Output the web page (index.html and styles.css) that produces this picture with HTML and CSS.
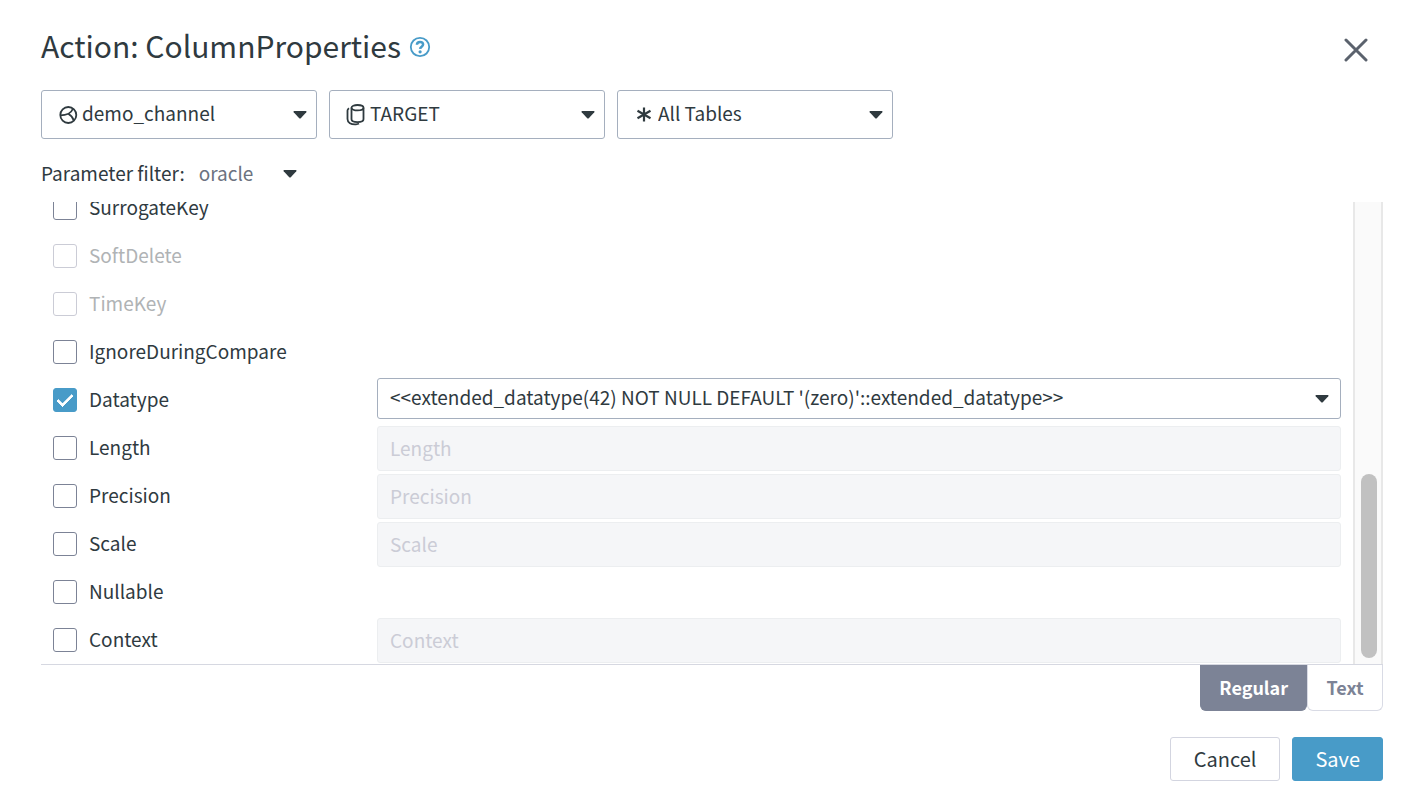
FILE: index.html
```html
<!DOCTYPE html>
<html lang="en">
<head>
    <meta charset="UTF-8">
    <meta name="viewport" content="width=device-width, initial-scale=1.0">
    <title>Action: ColumnProperties</title>
    <link rel="stylesheet" href="styles.css">
</head>
<body>
    <form class="dialog">
        <header class="dialog-header">
            <h1>Action: ColumnProperties</h1>
            <a class="help" href="#" aria-label="Help">
                <svg width="22" height="22" viewBox="0 0 22 22" fill="none" stroke="currentColor">
                    <circle cx="11" cy="11" r="9.200" stroke-width="1.800"/>
                    <path d="M7.900 8.800C8 6.900 9.300 6 11 6c1.800 0 3.100 1 3.100 2.600 0 2-2.900 2.200-3 4.300" stroke-width="2.500"/>
                    <circle cx="11.100" cy="15.800" r="1.600" fill="currentColor" stroke="none"/>
                </svg>
            </a>
            <button type="button" class="close" aria-label="Close">
                <svg width="24" height="24" viewBox="0 0 24 24" fill="none" stroke="currentColor" stroke-width="3" stroke-linecap="round">
                    <path d="M2 2l20 20M22 2L2 22"/>
                </svg>
            </button>
        </header>

        <div class="scope">
            <div class="dropdown">
                <select aria-label="Channel"><option>demo_channel</option></select>
                <svg class="icon" width="20" height="20" viewBox="0 0 20 20" fill="none" stroke="currentColor" stroke-width="1.800">
                    <circle cx="10.300" cy="10" r="8"/>
                    <path d="M2.300 10.300C8 10.300 13.500 8 15 3.500M10.500 9c2.500 1.300 4.300 3.500 5.300 6.500"/>
                </svg>
                <svg class="arrow" width="14" height="8" viewBox="0 0 14 8"><path d="M1 0h12q1 0.500 0.300 1.300L8 7q-1 1-2 0L0.700 1.300Q0 0.500 1 0z" fill="currentColor"/></svg>
            </div>
            <div class="dropdown">
                <select aria-label="Location"><option>TARGET</option></select>
                <svg class="icon" width="20" height="22" viewBox="0 0 20 22" fill="none" stroke="currentColor" stroke-width="1.800">
                    <ellipse cx="11.500" cy="3.700" rx="6" ry="2.700"/>
                    <path d="M5.500 3.700v11.500c0 3.800 12 3.800 12 0V3.700"/>
                    <path d="M3 4.300C2 5 1.500 5.500 1.500 6.500V15c0 3.800 3.500 5.600 8.500 5.300 1.300-.1 2.300-.4 3-.8"/>
                </svg>
                <svg class="arrow" width="14" height="8" viewBox="0 0 14 8"><path d="M1 0h12q1 0.500 0.300 1.300L8 7q-1 1-2 0L0.700 1.300Q0 0.500 1 0z" fill="currentColor"/></svg>
            </div>
            <div class="dropdown">
                <select aria-label="Tables"><option>All Tables</option></select>
                <svg class="icon" width="20" height="20" viewBox="0 0 20 20" fill="none" stroke="currentColor" stroke-width="2.200">
                    <path d="M10 2.500v14M3.500 5.800l13 7.400M16.500 5.800l-13 7.400"/>
                </svg>
                <svg class="arrow" width="14" height="8" viewBox="0 0 14 8"><path d="M1 0h12q1 0.500 0.300 1.300L8 7q-1 1-2 0L0.700 1.300Q0 0.500 1 0z" fill="currentColor"/></svg>
            </div>
        </div>

        <div class="filter">
            <label for="filter">Parameter filter:</label>
            <div class="dropdown plain">
                <select id="filter"><option>oracle</option></select>
                <svg class="arrow" width="14" height="8" viewBox="0 0 14 8"><path d="M1 0h12q1 0.500 0.300 1.300L8 7q-1 1-2 0L0.700 1.300Q0 0.500 1 0z" fill="currentColor"/></svg>
            </div>
        </div>

        <div class="params">
            <div class="param-list">
                <div class="param">
                    <label><input type="checkbox">SurrogateKey</label>
                </div>
                <div class="param">
                    <label class="disabled"><input type="checkbox" disabled>SoftDelete</label>
                </div>
                <div class="param">
                    <label class="disabled"><input type="checkbox" disabled>TimeKey</label>
                </div>
                <div class="param">
                    <label><input type="checkbox">IgnoreDuringCompare</label>
                </div>
                <div class="param">
                    <label><input type="checkbox" checked>Datatype</label>
                    <div class="dropdown value">
                        <select aria-label="Datatype value"><option>&lt;&lt;extended_datatype(42) NOT NULL DEFAULT '(zero)'::extended_datatype&gt;&gt;</option></select>
                        <svg class="arrow" width="14" height="8" viewBox="0 0 14 8"><path d="M1 0h12q1 0.500 0.300 1.300L8 7q-1 1-2 0L0.700 1.300Q0 0.500 1 0z" fill="currentColor"/></svg>
                    </div>
                </div>
                <div class="param">
                    <label><input type="checkbox">Length</label>
                    <input type="text" aria-label="Length value" placeholder="Length" disabled>
                </div>
                <div class="param">
                    <label><input type="checkbox">Precision</label>
                    <input type="text" aria-label="Precision value" placeholder="Precision" disabled>
                </div>
                <div class="param">
                    <label><input type="checkbox">Scale</label>
                    <input type="text" aria-label="Scale value" placeholder="Scale" disabled>
                </div>
                <div class="param">
                    <label><input type="checkbox">Nullable</label>
                </div>
                <div class="param">
                    <label><input type="checkbox">Context</label>
                    <input type="text" aria-label="Context value" placeholder="Context" disabled>
                </div>
            </div>
            <div class="scrollbar"><div class="thumb"></div></div>
        </div>

        <div class="tabs">
            <button type="button" class="tab active">Regular</button>
            <button type="button" class="tab">Text</button>
        </div>

        <footer class="actions">
            <button type="button" class="btn">Cancel</button>
            <button type="submit" class="btn btn-primary">Save</button>
        </footer>
    </form>
</body>
</html>
```

FILE: styles.css
```css
* {
    box-sizing: border-box;
}
body {
    margin: 0;
    background: #fff;
    color: #2f3a3f;
    font-family: "Noto Sans CJK SC", "Open Sans", sans-serif;
    font-size: 19px;
    line-height: 28px;
}
button, input, select {
    margin: 0;
    font: inherit;
    color: inherit;
}
button, select, label {
    cursor: pointer;
}
svg {
    display: block;
}
.dialog {
    display: flex;
    flex-direction: column;
    height: 100vh;
    padding: 24px 39px 27px 41px;
}

/* Header */
.dialog-header {
    display: flex;
    align-items: center;
    height: 46px;
    margin-bottom: 20px;
}
h1 {
    margin: 0;
    padding-bottom: 4px;
    font-size: 30px;
    font-weight: 400;
    line-height: 42px;
}
.help {
    margin-left: 8px;
    color: #489bc8;
}
.close {
    margin-left: auto;
    padding: 6px 15px 0;
    border: none;
    background: none;
    color: #5b626d;
}

/* Dropdowns */
.scope {
    display: flex;
    gap: 12px;
}
.dropdown {
    display: grid;
    align-items: center;
    width: 276px;
    height: 49px;
}
.dropdown > * {
    grid-area: 1 / 1;
}
.dropdown select {
    width: 100%;
    height: 100%;
    padding: 0 36px 3px 40px;
    border: 1px solid #a5afbe;
    border-radius: 3px;
    background: #fff;
    appearance: none;
}
.dropdown svg {
    pointer-events: none;
}
.dropdown .icon {
    margin-left: 17px;
}
.dropdown .arrow {
    justify-self: end;
    margin-right: 10px;
}
.dropdown.plain {
    width: 122px;
    height: 27px;
}
.dropdown.plain select {
    padding: 0 36px 2px 14px;
    border: none;
    color: #6b7280;
}
.dropdown.value {
    flex: 1;
    height: 41px;
}
.dropdown.value select {
    padding: 0 36px 3px 12px;
}
.dropdown.value .arrow {
    margin-right: 12px;
}
.filter {
    display: flex;
    padding: 20px 0 15px;
}

/* Parameter list */
.params {
    display: flex;
    flex: 1;
    min-height: 0;
    border-bottom: 1px solid #d6d8e1;
}
.param-list {
    display: flex;
    flex: 1;
    flex-direction: column;
    justify-content: flex-end;
    padding: 0 12px;
    overflow: hidden;
}
.param {
    display: flex;
    flex: none;
    height: 48px;
    padding-top: 2px;
}
.param label {
    display: flex;
    align-items: center;
    gap: 12px;
    width: 324px;
    height: 44px;
    padding-bottom: 2px;
}
.param label.disabled {
    color: #b0b3b5;
    cursor: default;
}
input[type="checkbox"] {
    display: grid;
    place-items: center;
    width: 24px;
    height: 24px;
    margin-top: 2px;
    border: 1px solid #7c8396;
    border-radius: 3px;
    background: #fff;
    appearance: none;
}
input[type="checkbox"]:disabled {
    border-color: #cbccd6;
}
input[type="checkbox"]:checked {
    border-color: #489bc8;
    background: #489bc8;
}
input[type="checkbox"]:checked::after {
    content: "";
    box-sizing: border-box;
    width: 16px;
    height: 9px;
    margin-bottom: 4px;
    border: solid #fff;
    border-width: 0 0 3px 3px;
    border-radius: 1px;
    transform: rotate(-45deg);
}
input[type="text"] {
    flex: 1;
    height: 45px;
    padding: 0 12px 2px;
    border: 1px solid #eceef0;
    border-radius: 3px;
    background: #f5f6f8;
}
input[type="text"]::placeholder {
    color: #cbccd6;
    opacity: 1;
}
.scrollbar {
    display: flex;
    flex-direction: column;
    justify-content: flex-end;
    width: 30px;
    padding: 6px;
    border: solid #e8e8e8;
    border-width: 0 2px;
    background: #fafafa;
}
.thumb {
    width: 16px;
    height: 41%;
    border-radius: 8px;
    background: #c1c1c1;
}

/* Tabs and actions */
.tabs {
    display: flex;
    justify-content: flex-end;
}
.tab {
    min-width: 76px;
    height: 46px;
    padding: 0 18px 2px;
    border: 1px solid #d9dbe5;
    border-top: none;
    border-radius: 0 0 6px 6px;
    background: #fff;
    color: #7c8396;
    font-size: 18px;
    font-weight: 600;
}
.tab.active {
    border-color: #7c8396;
    background: #7c8396;
    color: #fff;
}
.actions {
    display: flex;
    justify-content: flex-end;
    gap: 12px;
    margin-top: 26px;
}
.btn {
    height: 44px;
    padding: 0 23px;
    border: 1px solid #d3d5e0;
    border-radius: 3px;
    background: #fff;
    font-size: 20px;
}
.btn-primary {
    padding: 0 22px;
    border-color: #489bc8;
    background: #489bc8;
    color: #fff;
}
```
